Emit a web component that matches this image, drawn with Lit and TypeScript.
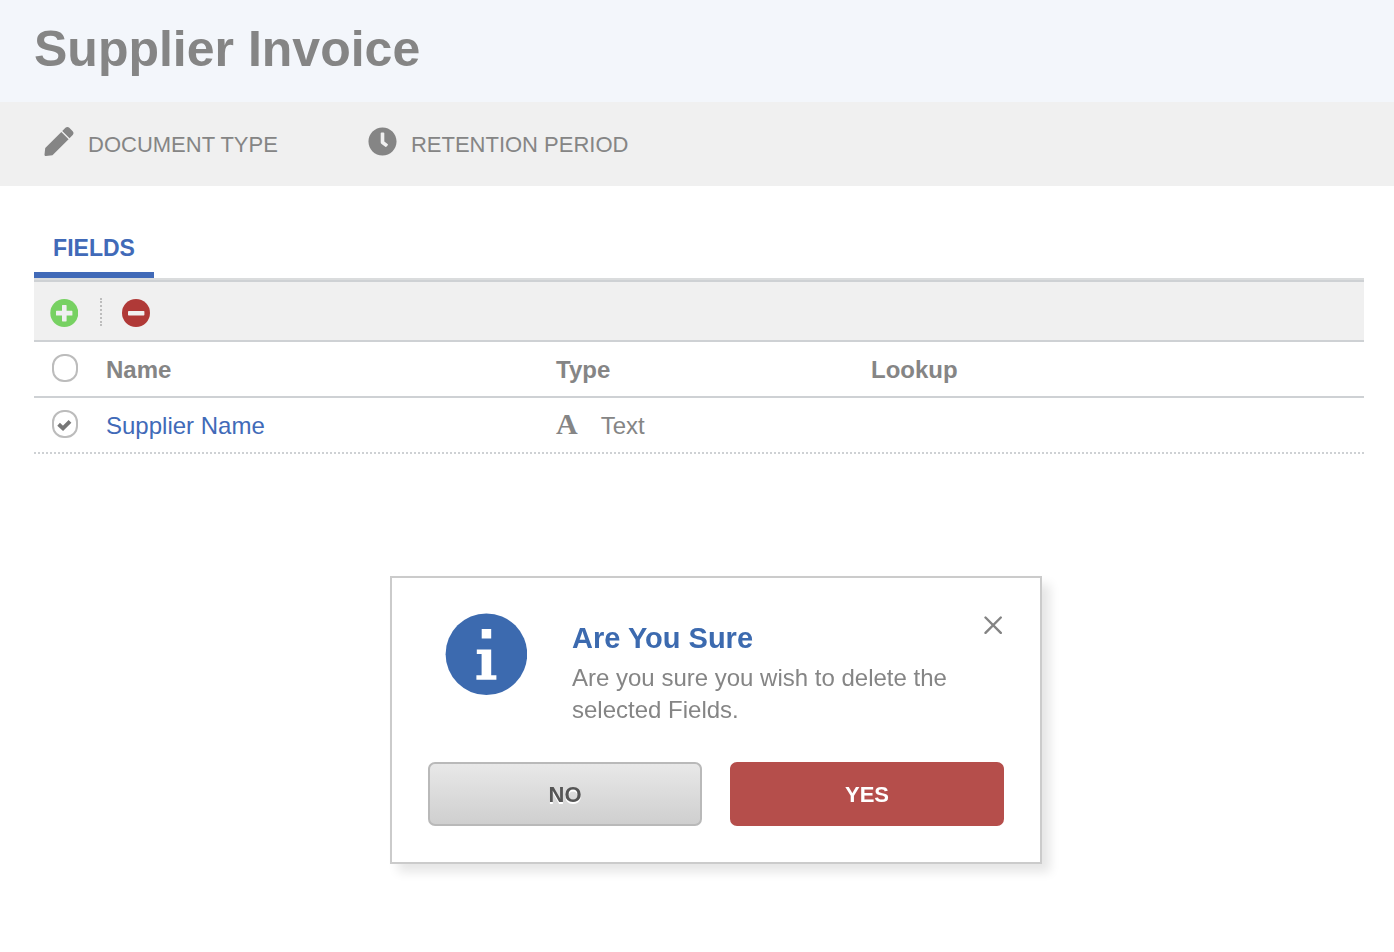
import { LitElement, html, css, svg } from "lit";
import { customElement, state } from "lit/decorators.js";

interface Field {
  name: string;
  type: string;
  lookup: string;
  selected: boolean;
}

const pencil = svg`<path fill="currentColor" d="M297 87l128.500 128.500-284.700 283.700-114.14 12.6C11.35 513.54-1.56 500.62.14 485.34l12.7-114.22 284.100-284.100zm200.940-12.820l-60.11-60.11c-18.75-18.75-49.16-18.75-67.91 0l-56.55 56.55 128.02 128.02 56.55-56.55c18.75-18.76 18.75-49.16 0-67.91z"/>`;
const clock = svg`<path fill="currentColor" d="M256,8C119,8,8,119,8,256S119,504,256,504,504,393,504,256,393,8,256,8Zm92.49,313h0l-20,25a16,16,0,0,1-22.49,2.5h0l-67-49.72a40,40,0,0,1-15-31.23V112a16,16,0,0,1,16-16h32a16,16,0,0,1,16,16V256l58,42.5A16,16,0,0,1,348.49,321Z"/>`;

@customElement("app-root")
export class AppRoot extends LitElement {
  @state() private fields: Field[] = [
    { name: "Supplier Name", type: "Text", lookup: "", selected: true },
  ];
  @state() private confirming = true;

  static styles = css`
    :host {
      display: block;
      min-height: 100vh;
      background: #fff;
      color: #858585;
      font: 24px/32px "Liberation Sans", Arial, sans-serif;
    }
    * { box-sizing: border-box; }
    svg { display: block; flex: none; }
    button { font: inherit; color: inherit; cursor: pointer; margin: 0; }
    a { text-decoration: none; }

    .title-bar { background: #f3f6fb; padding: 19px 34px 23px; }
    h1 { margin: 0; font-size: 50px; line-height: 60px; font-weight: 700; }

    .actions {
      display: flex;
      gap: 90px;
      height: 84px;
      padding: 0 44px;
      align-items: center;
      background: #f0f0f0;
    }
    .action {
      display: flex;
      align-items: center;
      gap: 14px;
      padding: 0 0 5px;
      border: 0;
      background: none;
      font-size: 22px;
      line-height: 28px;
    }
    .action span { padding-top: 6px; }

    main { padding: 36px 30px 0 34px; }
    .tabs { display: flex; border-bottom: 2px solid #dadcdd; }
    .tab {
      min-width: 120px;
      padding: 10px 18px 8px;
      border: 0;
      border-bottom: 6px solid #416ab8;
      background: none;
      color: #416ab8;
      font-weight: 700;
      font-size: 23px;
    }
    .toolbar {
      display: flex;
      align-items: center;
      height: 62px;
      padding: 2px 16px 0;
      border: solid #ced1d4;
      border-width: 2px 0;
      background: #f0f0f0;
    }
    .tool { padding: 2px 0 0; border: 0; background: none; }
    .divider { height: 28px; margin: 0 20px 0 22px; border-left: 2px dotted #bdbdbd; }

    table { width: 100%; table-layout: fixed; border-collapse: collapse; text-align: left; }
    .pick-col { width: 72px; }
    .name-col { width: 450px; }
    .type-col { width: 315px; }
    th, td { height: 56px; padding: 2px 0 2px; }
    thead { background: linear-gradient(#ced1d4, #ced1d4) left bottom / 100% 2px no-repeat; }
    tbody tr {
      background: repeating-linear-gradient(90deg, #ced1d4 0 2px, transparent 2px 4px) left bottom / 100% 2px no-repeat;
    }
    .pick { padding: 0 0 4px 18px; }
    .check { position: relative; display: block; width: 26px; height: 28px; }
    .check input {
      appearance: none;
      display: block;
      width: 100%;
      height: 100%;
      margin: 0;
      border: 2px solid #bcbcbc;
      border-radius: 12px;
      background: #fff;
    }
    .check svg { position: absolute; inset: 0; display: none; pointer-events: none; }
    .check input:checked + svg { display: block; }
    td a { color: #416ab8; }
    .type { display: flex; align-items: flex-start; gap: 23px; }
    .type-icon { font: 700 30px/28px "Liberation Serif", "Times New Roman", serif; }

    .overlay {
      position: fixed;
      inset: 0;
      display: flex;
      justify-content: center;
      align-items: flex-end;
      padding: 0 0 88px 38px;
      pointer-events: none;
    }
    .dialog {
      width: 652px;
      max-width: 100%;
      padding: 35px 36px 36px;
      border: 2px solid #cbcbcb;
      background: #fff;
      box-shadow: 8px 8px 10px rgba(0, 0, 0, 0.1);
      pointer-events: auto;
    }
    .message { display: flex; align-items: flex-start; padding-left: 17px; }
    .copy { flex: 1; padding: 9px 0 36px 45px; }
    h2 { margin: 0; font-size: 29px; line-height: 32px; color: #3c6aaf; }
    p { margin: 0; padding-top: 8px; }
    .close { padding: 3px 2px; border: 0; background: none; }
    .buttons { display: flex; gap: 28px; }
    .btn {
      flex: 1;
      height: 64px;
      padding: 2px 0 0;
      border: 2px solid #b9b9b9;
      border-radius: 7px;
      font-size: 22px;
      font-weight: 700;
    }
    .no {
      background: linear-gradient(#e8e8e8, #cfcfcf);
      color: #555;
      text-shadow: 0 2px 0 #fff;
    }
    .yes { border-color: #b54e4b; background: #b54e4b; color: #fff; }
  `;

  private toggleAll(e: Event) {
    const selected = (e.target as HTMLInputElement).checked;
    this.fields = this.fields.map((f) => ({ ...f, selected }));
  }

  private toggle(index: number, e: Event) {
    const selected = (e.target as HTMLInputElement).checked;
    this.fields = this.fields.map((f, i) => (i === index ? { ...f, selected } : f));
  }

  private close() {
    this.confirming = false;
  }

  private deleteSelected() {
    this.fields = this.fields.filter((f) => !f.selected);
    this.close();
  }

  private checkbox(label: string, checked: boolean, onChange: (e: Event) => void) {
    return html`<label class="check">
      <input type="checkbox" aria-label=${label} .checked=${checked} @change=${onChange} />
      <svg width="26" height="28" viewBox="0 0 26 28" aria-hidden="true">
        <path d="M6.600 14.300l4.400 4.100 7-7" fill="none" stroke="#777" stroke-width="3.900" />
      </svg>
    </label>`;
  }

  private dialog() {
    return html`<div class="overlay">
      <section class="dialog" role="dialog" aria-labelledby="confirm-title">
        <div class="message">
          <svg width="82" height="82" viewBox="0 0 82 82" aria-hidden="true">
            <circle cx="41.4" cy="41.2" r="40.800" fill="#3c6aaf" />
            <path fill="#fff" d="M36.7 16h9.5v9.6h-9.5zM31.8 36.4h14.4v25.8h5.2v4.5H31.4v-4.5h5.2V41h-4.8z" />
          </svg>
          <div class="copy">
            <h2 id="confirm-title">Are You Sure</h2>
            <p>Are you sure you wish to delete the selected Fields.</p>
          </div>
          <button class="close" aria-label="Close" @click=${this.close}>
            <svg width="18" height="18" viewBox="0 0 18 18" aria-hidden="true">
              <path d="M1.5 1.5l15.300 15.300M16.8 1.5L1.5 16.8" stroke="#848484" stroke-width="2.4" stroke-linecap="round" />
            </svg>
          </button>
        </div>
        <div class="buttons">
          <button class="btn no" @click=${this.close}>NO</button>
          <button class="btn yes" @click=${this.deleteSelected}>YES</button>
        </div>
      </section>
    </div>`;
  }

  render() {
    return html`
      <header class="title-bar"><h1>Supplier Invoice</h1></header>
      <nav class="actions">
        <button class="action">
          <svg width="30" height="29" viewBox="0 0 512 512" aria-hidden="true">${pencil}</svg>
          <span>DOCUMENT TYPE</span>
        </button>
        <button class="action">
          <svg width="29" height="29" viewBox="0 0 512 512" aria-hidden="true">${clock}</svg>
          <span>RETENTION PERIOD</span>
        </button>
      </nav>
      <main>
        <div class="tabs" role="tablist">
          <button class="tab" role="tab" aria-selected="true">FIELDS</button>
        </div>
        <div class="toolbar">
          <button class="tool" aria-label="Add field">
            <svg width="28" height="28" viewBox="0 0 28 28" aria-hidden="true">
              <circle cx="14.3" cy="14" r="14" fill="#77d162" />
              <path d="M12.600 6h3.400q.6 0 .6.6v5.200h5.200q.6 0 .6.6v3.600q0 .6-.6.6h-5.200v5.200q0 .6-.6.6h-3.400q-.6 0-.6-.6v-5.200H6.600q-.6 0-.6-.6v-3.600q0-.6.6-.6H12V6.600q0-.6.6-.6z" fill="#f0f0f0" />
            </svg>
          </button>
          <span class="divider"></span>
          <button class="tool" aria-label="Delete selected fields" @click=${() => (this.confirming = true)}>
            <svg width="28" height="28" viewBox="0 0 28 28" aria-hidden="true">
              <circle cx="14" cy="14" r="14" fill="#b03937" />
              <rect x="6" y="12" width="16.400" height="4.500" rx=".7" fill="#f0f0f0" />
            </svg>
          </button>
        </div>
        <table>
          <colgroup>
            <col class="pick-col" /><col class="name-col" /><col class="type-col" /><col />
          </colgroup>
          <thead>
            <tr>
              <th class="pick">${this.checkbox("Select all fields", false, (e) => this.toggleAll(e))}</th>
              <th>Name</th>
              <th>Type</th>
              <th>Lookup</th>
            </tr>
          </thead>
          <tbody>
            ${this.fields.map(
              (f, i) => html`<tr>
                <td class="pick">${this.checkbox("Select " + f.name, f.selected, (e) => this.toggle(i, e))}</td>
                <td><a href="#">${f.name}</a></td>
                <td>
                  <div class="type"><span class="type-icon" aria-hidden="true">A</span><span>${f.type}</span></div>
                </td>
                <td>${f.lookup}</td>
              </tr>`
            )}
          </tbody>
        </table>
      </main>
      ${this.confirming ? this.dialog() : ""}
    `;
  }
}
